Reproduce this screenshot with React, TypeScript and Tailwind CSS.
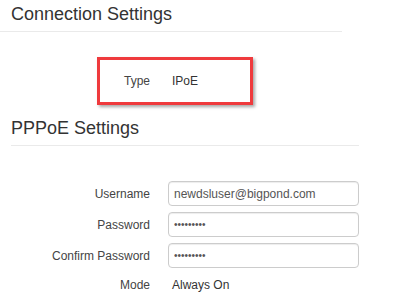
import React from "react";

export default function App() {
  const font = { fontFamily: '"Liberation Sans", Arial, sans-serif' };
  return (
    <div
      className="w-[400px] h-[302px] bg-white overflow-hidden relative"
      style={font}
    >
      {/* Connection Settings */}
      <div className="w-[342px] border-b border-[#eaeaea] pt-[4px] pb-[7px] pl-[11px]">
        <h3 className="text-[18px] leading-[20px] text-[#333]">Connection Settings</h3>
      </div>

      {/* Highlighted type row */}
      <div className="ml-[97px] mt-[25px] w-[156px] h-[48px] border-[3px] border-[#ef3a3d] shadow-[2px_2px_3px_rgba(0,0,0,0.35)] pt-[11px]">
        <div className="flex items-center text-[12px] leading-[20px]">
          <span className="w-[50px] text-right text-[#444]">Type</span>
          <span className="ml-[22px] text-[#333]">IPoE</span>
        </div>
      </div>

      {/* PPPoE Settings */}
      <div className="ml-[11px] mt-[13px] w-[348px] border-b border-[#eaeaea] pb-[7px]">
        <h3 className="text-[18px] leading-[20px] text-[#333]">PPPoE Settings</h3>
      </div>

      <div className="mt-[35px] grid grid-cols-[150px_191px] gap-x-[18px] gap-y-[6px] items-center text-[12px]">
        <label className="text-right text-[#444]">Username</label>
        <input
          readOnly
          value="newdsluser@bigpond.com"
          className="h-[25px] border border-[#ccc] rounded-[4px] px-[5px] text-[12px] text-[#555] shadow-[inset_0_1px_1px_rgba(0,0,0,0.075)] outline-none"
          style={font}
        />
        <label className="text-right text-[#444]">Password</label>
        <input
          readOnly
          type="password"
          value="aaaaaaaaa"
          className="h-[25px] border border-[#ccc] rounded-[4px] px-[5px] text-[10px] text-[#555] shadow-[inset_0_1px_1px_rgba(0,0,0,0.075)] outline-none"
          style={font}
        />
        <label className="text-right text-[#444]">Confirm Password</label>
        <input
          readOnly
          type="password"
          value="aaaaaaaaa"
          className="h-[25px] border border-[#ccc] rounded-[4px] px-[5px] text-[10px] text-[#555] shadow-[inset_0_1px_1px_rgba(0,0,0,0.075)] outline-none"
          style={font}
        />
        <label className="text-right text-[#444] leading-[20px] mt-[1px]">Mode</label>
        <span className="pl-[4px] text-[#333] leading-[20px] mt-[1px]">Always On</span>
      </div>
    </div>
  );
}
